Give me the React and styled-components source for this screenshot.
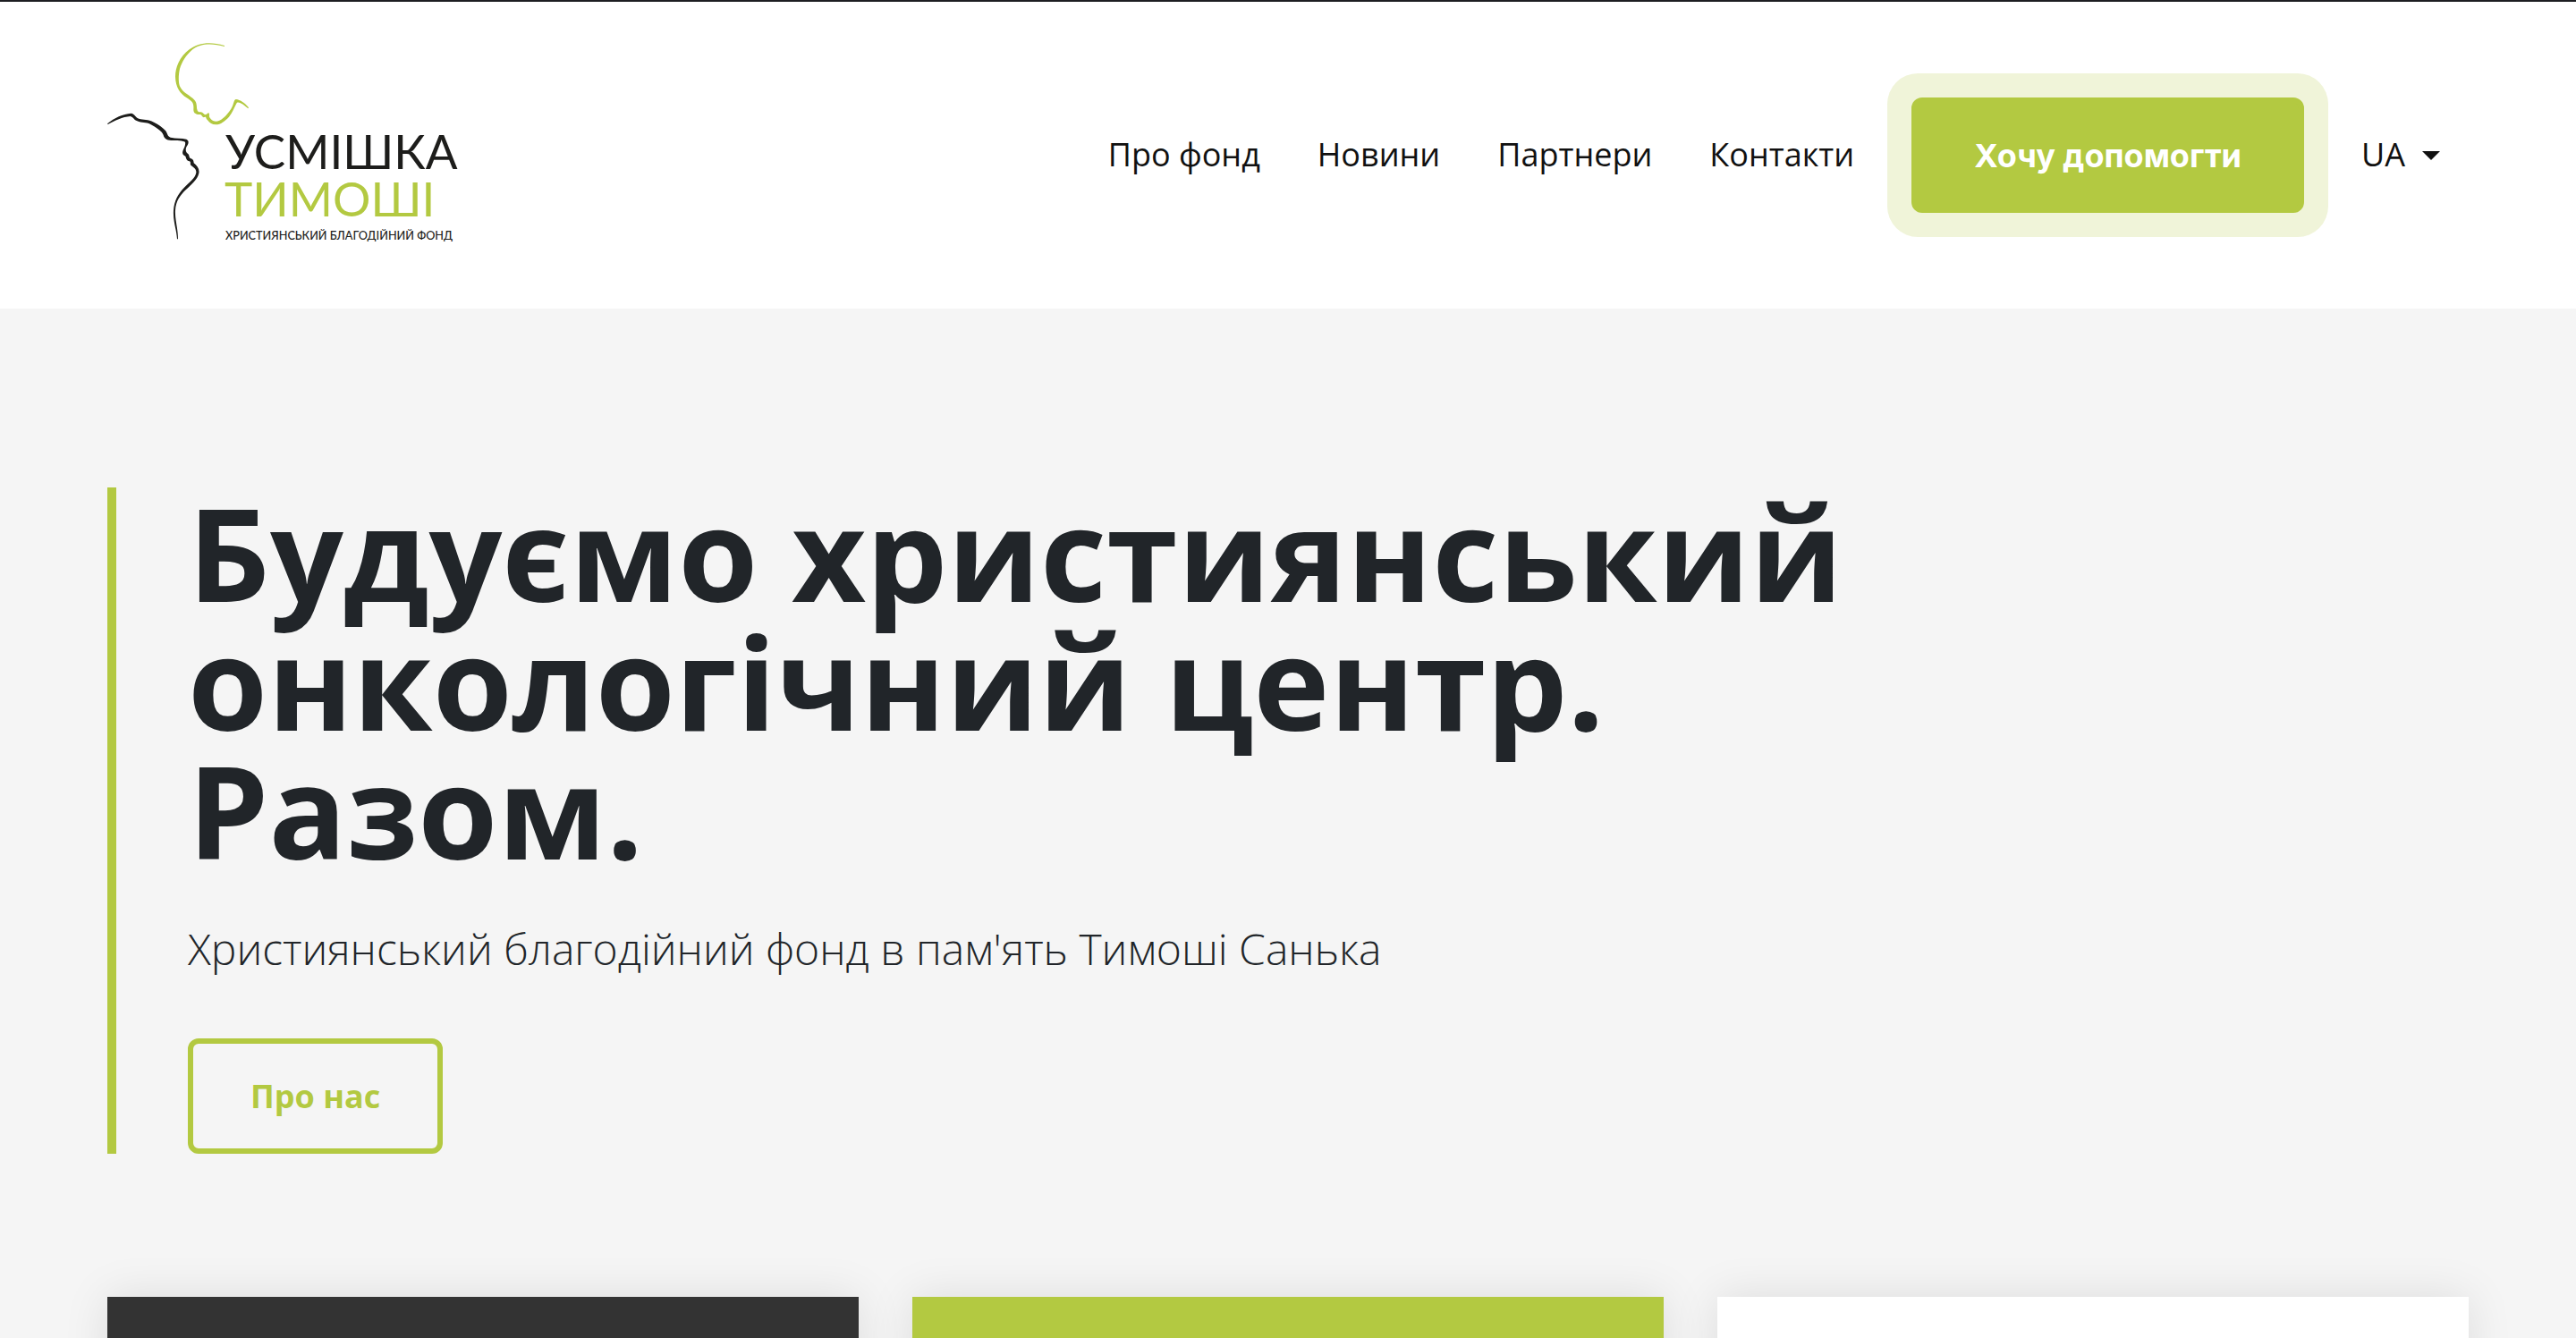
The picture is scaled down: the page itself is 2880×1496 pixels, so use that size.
import React from "react";
import styled, { createGlobalStyle } from "styled-components";

const green = "#b3c941";
const ink = "#212529";

const GlobalStyle = createGlobalStyle`
  *, *::before, *::after { box-sizing: border-box; }
  body {
    margin: 0;
    background: #f5f5f5;
    color: ${ink};
    font-family: "Open Sans", "Noto Sans", sans-serif;
    font-size: 36px;
    line-height: 54px;
  }
`;

const Page = styled.div`
  height: 100vh;
  overflow: hidden;
  border-top: 2px solid #1d1e22;
`;

const Header = styled.header`
  display: flex;
  align-items: center;
  justify-content: space-between;
  padding: 45px 120px;
  background: #fff;
`;

const LogoLink = styled.a`
  display: block;
  line-height: 0;
`;

const LogoSvg = styled.svg`
  display: block;
  width: 392px;
  height: 253px;
  overflow: visible;
`;

const Nav = styled.nav`
  display: flex;
  align-items: center;
  gap: 64px;
  padding-right: 32px;
`;

const NavLink = styled.a`
  padding-bottom: 2px;
  color: #111;
  text-decoration: none;
  white-space: nowrap;
`;

const Button = styled.button`
  display: inline-block;
  padding: 32px 64px 31px;
  border: 6px solid ${green};
  border-radius: 12px;
  background: ${(p) => (p.$solid ? green : "transparent")};
  color: ${(p) => (p.$solid ? "#fff" : green)};
  box-shadow: ${(p) => (p.$solid ? "0 0 0 27px #f0f4d9" : "none")};
  font-family: ${(p) => (p.$solid ? "Inter, sans-serif" : "inherit")};
  font-size: 36px;
  font-weight: 700;
  line-height: 54px;
  white-space: nowrap;
  cursor: pointer;
`;

const LanguageField = styled.label`
  position: relative;
  display: flex;
  align-items: center;
`;

const LanguageSelect = styled.select`
  appearance: none;
  width: 88px;
  padding: 0 0 2px;
  border: 0;
  background: transparent;
  color: #111;
  font: inherit;
`;

const Caret = styled.svg`
  position: absolute;
  right: 0;
  width: 20px;
  height: 10px;
  fill: #111;
  pointer-events: none;
`;

const Hero = styled.main`
  padding: 200px 120px 0;
`;

const Intro = styled.section`
  padding-left: 80px;
  border-left: 10px solid ${green};
`;

const Title = styled.h1`
  max-width: 1900px;
  margin: 0 0 48px;
  font-size: 144px;
  font-weight: 700;
  line-height: 144px;
`;

const Lead = styled.p`
  margin: 0 0 64px;
  font-size: 48px;
  font-weight: 300;
  line-height: 72px;
`;

const Actions = styled.div`
  display: flex;
`;

const Cards = styled.section`
  display: grid;
  grid-template-columns: repeat(3, 1fr);
  gap: 60px;
  margin-top: 160px;
`;

const Card = styled.article`
  min-height: 480px;
  background: ${(p) => p.$tone};
  box-shadow: 0 0 48px rgba(0, 0, 0, 0.1);
`;

const links = ["Про фонд", "Новини", "Партнери", "Контакти"];
const cardTones = ["#333", green, "#fff"];

function Logo() {
  return (
    <LogoSvg viewBox="60 81 1176 759" role="img" aria-label="Усмішка Тимоші">
      <path
        fill={green}
        d="M453 93 C405 78 366 83 335 106 C302 131 288 166 288 197 C289 233 304 253 326 268 C343 279 348 284 349 296 C350 306 346 316 356 321 C362 326 369 322 374 325 C379 329 378 335 386 333 C393 331 389 337 396 343 C404 353 411 358 424 358 C440 358 455 346 468 332 C480 318 485 301 493 287 C496 279 508 286 515 290 L532 304 L534 301 C522 286 506 274 491 273 C483 276 485 289 475 305 C462 324 444 346 424 347 C413 347 407 340 403 334 C400 329 404 323 400 319 C396 318 395 324 389 325 C383 325 381 317 374 316 C368 316 363 317 361 307 C359 297 361 284 352 275 C337 259 315 253 304 231 C297 217 299 189 303 171 C310 148 324 125 346 106 C370 86 410 83 453 96 Z"
      />
      <path
        fill="#1d1d1b"
        d="M60 355 C84 334 112 323 140 320 C151 321 155 335 166 338 C181 342 196 339 216 350 C232 358 245 367 255 378 C263 388 260 397 272 401 C291 405 310 402 325 407 C334 411 333 419 329 427 C322 436 321 447 328 454 C336 459 333 464 337 470 C348 473 350 480 350 487 C361 496 370 507 367 521 C362 543 341 559 323 577 C304 596 290 614 288 645 C286 675 297 706 297 742 L294 742 C292 710 280 682 282 647 C284 613 298 590 317 570 C335 551 355 538 358 519 C359 507 350 502 342 496 C335 490 342 485 336 481 C324 479 325 470 322 464 C311 459 311 453 314 444 C318 434 323 427 321 417 C316 411 291 412 274 411 C258 410 251 405 248 393 C243 379 222 367 205 357 C189 349 176 353 160 346 C150 343 147 332 137 330 C111 332 85 345 62 357 Z"
      />
      <g fontFamily='"Lato", "Open Sans", sans-serif'>
        <text x="456" y="507" fontSize="159" fontWeight="400" fill="#1d1d1b">УСМІШКА</text>
        <text x="453" y="665" fontSize="159" fontWeight="400" fill={green}>ТИМОШІ</text>
        <text x="456" y="744" fontSize="38" fontWeight="500" fill="#1d1d1b">ХРИСТИЯНСЬКИЙ БЛАГОДІЙНИЙ ФОНД</text>
      </g>
    </LogoSvg>
  );
}

export default function App() {
  return (
    <>
      <GlobalStyle />
      <Page>
        <Header>
          <LogoLink href="#home">
            <Logo />
          </LogoLink>
          <Nav>
            {links.map((label) => (
              <NavLink key={label} href="#">{label}</NavLink>
            ))}
            <Button type="button" $solid>Хочу допомогти</Button>
            <LanguageField>
              <LanguageSelect aria-label="Мова" defaultValue="UA">
                <option value="UA">UA</option>
              </LanguageSelect>
              <Caret viewBox="0 0 20 10" aria-hidden="true">
                <path d="M0 0H20L10 10Z" />
              </Caret>
            </LanguageField>
          </Nav>
        </Header>
        <Hero>
          <Intro>
            <Title>Будуємо християнський онкологічний центр. Разом.</Title>
            <Lead>Християнський благодійний фонд в пам'ять Тимоші Санька</Lead>
            <Actions>
              <Button type="button">Про нас</Button>
            </Actions>
          </Intro>
          <Cards>
            {cardTones.map((tone) => (
              <Card key={tone} $tone={tone} />
            ))}
          </Cards>
        </Hero>
      </Page>
    </>
  );
}
